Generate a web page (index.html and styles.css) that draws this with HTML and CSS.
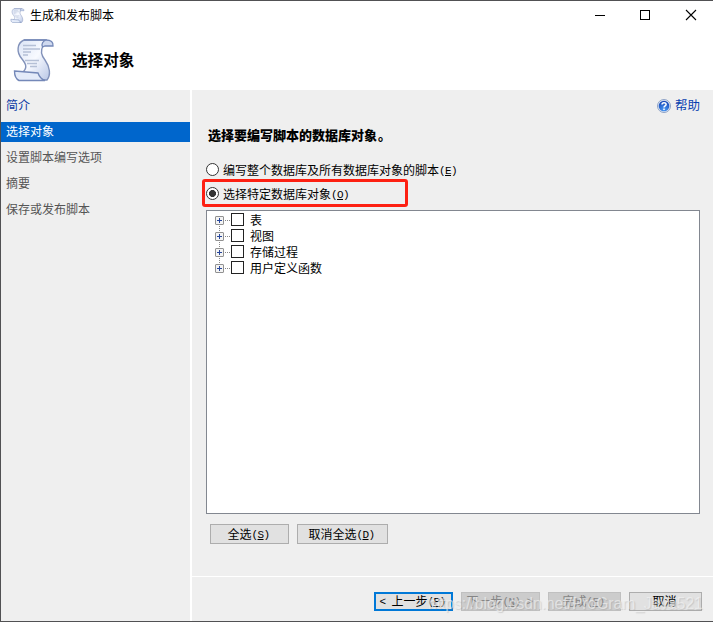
FILE: index.html
```html
<!DOCTYPE html>
<html lang="zh-CN">
<head>
<meta charset="utf-8">
<title>生成和发布脚本</title>
<link rel="stylesheet" href="styles.css">
</head>
<body>
<svg width="0" height="0" class="defs" aria-hidden="true">
  <defs>
    <linearGradient id="paper" x1="0" y1="0" x2="1" y2="1"><stop offset="0" stop-color="#dbe4f6"/><stop offset=".5" stop-color="#f8faff"/><stop offset="1" stop-color="#b9c7e6"/></linearGradient>
    <radialGradient id="ball" cx=".5" cy=".85" r=".8"><stop offset="0" stop-color="#4b9bf5"/><stop offset="1" stop-color="#1748b8"/></radialGradient>
    <symbol id="scroll" viewBox="0 0 42 44">
      <path d="M11 2H33L30 8C27 13 28 17 32 22C37 29 38 37 34 42H28L9 35C15 30 13 26 9 21C3 14 4 5 11 2Z" fill="url(#paper)" stroke="#8292ba" stroke-width="1.400"/>
      <path d="M11 2H33C38 2 40.500 4 40 8H32L29.500 9C28 6 30 3 33 2" fill="#d0daf0" stroke="#7488b8" stroke-width="1.300"/>
      <path d="M1.500 33L25 35C26 38 28 41 32 42.500H6C3 41 1.500 38 1.500 33Z" fill="#e4ebf9" stroke="#7488b8" stroke-width="1.400"/>
      <path d="M10 7.500H23M10 11H27M10 14H18M10 17H15M12 22.500H26M14 25.500H24M17 28.500H24" stroke="#b5c0d6" stroke-width="1.300"/>
    </symbol>
  </defs>
</svg>
<div class="window">
  <header class="titlebar">
    <svg class="app-icon"><use href="#scroll"/></svg>
    <span class="caption">生成和发布脚本</span>
    <svg class="controls" viewBox="0 0 102 12"><path d="M0 6.500H10" stroke="#000"/><rect x="45.500" y="1.500" width="9" height="9" fill="none" stroke="#000"/><path d="M91 1L101 11M101 1L91 11" stroke="#000" stroke-width="1.100"/></svg>
  </header>
  <div class="banner">
    <svg class="banner-icon"><use href="#scroll"/></svg>
    <h1>选择对象</h1>
  </div>
  <div class="body">
    <nav class="steps">
      <a class="step visited">简介</a>
      <a class="step current">选择对象</a>
      <a class="step">设置脚本编写选项</a>
      <a class="step">摘要</a>
      <a class="step">保存或发布脚本</a>
    </nav>
    <main class="main">
      <section class="content">
        <div class="help">
          <svg viewBox="0 0 14 14" class="help-icon"><circle cx="7" cy="7" r="6.500" fill="#dce5f3" stroke="#8fa3c6"/><circle cx="7" cy="7" r="5.300" fill="url(#ball)"/><path d="M5 5.600C5 3 9.100 3.100 9.100 5.400C9.100 6.800 7 6.800 7 8.400M7 9.500V11" fill="none" stroke="#fff" stroke-width="1.500"/></svg>
          <span>帮助</span>
        </div>
        <h2>选择要编写脚本的数据库对象<span class="stop">。</span></h2>
        <label class="option"><i class="radio"></i><span>编写整个数据库及所有数据库对象的脚本<b>(<u>E</u>)</b></span></label>
        <div class="highlight"><label class="option"><i class="radio on"></i><span>选择特定数据库对象<b>(<u>O</u>)</b></span></label></div>
        <div class="tree">
          <div class="node"><i class="plus"></i><i class="dots"></i><i class="check"></i><span>表</span></div>
          <div class="node"><i class="plus"></i><i class="dots"></i><i class="check"></i><span>视图</span></div>
          <div class="node"><i class="plus"></i><i class="dots"></i><i class="check"></i><span>存储过程</span></div>
          <div class="node"><i class="plus"></i><i class="dots"></i><i class="check"></i><span>用户定义函数</span></div>
        </div>
        <div class="select-buttons">
          <button class="btn all"><span>全选<b>(<u>S</u>)</b></span></button>
          <button class="btn none"><span>取消全选<b>(<u>D</u>)</b></span></button>
        </div>
      </section>
      <footer class="footer">
        <button class="btn back"><span><b>&lt; </b>上一步<b>(<u>P</u>)</b></span></button>
        <button class="btn next" disabled><span>下一步<b>(<u>N</u>) &gt;</b></span></button>
        <button class="btn finish" disabled><span>完成<b>(<u>F</u>)</b></span></button>
        <button class="btn cancel"><span>取消</span></button>
      </footer>
    </main>
  </div>
  <div class="watermark">https://blog.csdn.net/ProGram_Java521</div>
</div>
</body>
</html>
```

FILE: styles.css
```css
* { box-sizing: border-box; }
body {
  margin: 0;
  font: 12px/16px "Noto Sans CJK SC", sans-serif;
  color: #000;
}
.defs { display: block; height: 0; }
.window {
  position: relative;
  display: flex;
  flex-direction: column;
  width: 713px;
  height: 622px;
  overflow: hidden;
  background: #fff;
  border: 1px solid #515153;
  border-right: 0;
}
.titlebar {
  display: flex;
  align-items: center;
  height: 29px;
  padding: 0 16px 0 9px;
}
.app-icon { width: 15px; height: 15px; }
.caption { margin: -1px 0 0 5px; }
.controls { width: 102px; height: 12px; margin: -1px 0 0 auto; }
.banner {
  display: flex;
  align-items: center;
  height: 60px;
  padding-left: 12px;
}
.banner-icon { width: 42px; height: 44px; }
h1 { margin: -2px 0 0 17px; font-size: 15.6px; line-height: 20px; font-weight: 700; }
.body { display: flex; flex: 1; gap: 2px; min-height: 0; }
.steps {
  display: flex;
  flex-direction: column;
  gap: 6px;
  width: 189px;
  padding-top: 6px;
  background: #efefef;
}
.step { height: 20px; padding-left: 5px; line-height: 17px; color: #555; }
.visited { color: #0b3aa5; }
.current { background: #0066cc; color: #fff; }
.main { display: flex; flex: 1; flex-direction: column; background: #efefef; }
.content { display: flex; flex-direction: column; height: 486px; padding: 6px 13px 0 14px; }
.help {
  display: flex;
  align-items: center;
  justify-content: flex-end;
  gap: 4px;
  height: 20px;
  font-size: 12.5px;
  color: #0840b0;
}
.help span { margin-top: -2px; }
.help-icon { width: 14px; height: 14px; }
h2 { margin: 11px 0 0 2px; font-size: 13px; line-height: 16px; font-weight: 900; }
.stop { margin-left: 1px; }
.option { display: flex; align-items: center; gap: 4px; height: 16px; margin-top: 18px; white-space: nowrap; }
.option span { padding-top: 1px; }
.option b, .btn b {
  font: 11px/12px "Liberation Mono", monospace;
  letter-spacing: -.6px;
  vertical-align: 1px;
  white-space: pre;
}
.radio { width: 13px; height: 13px; border: 1px solid #333; border-radius: 50%; background: #fff; }
.on { background: radial-gradient(circle, #333 0 3.2px, #fff 3.8px); }
.highlight {
  width: 206px;
  height: 28px;
  margin: 2px 0 0 -4px;
  padding: 3px 0 0 1px;
  border: 3px solid #fd2012;
  border-radius: 3px;
}
.highlight .option { margin: 0; }
.tree {
  width: 494px;
  height: 304px;
  margin-top: 3px;
  padding: 1px 0 0 8px;
  background: #fff;
  border: 1px solid #828790;
}
.node {
  display: flex;
  align-items: center;
  height: 16px;
  background: repeating-linear-gradient(#888 0 1px, transparent 1px 2px) 4px 0 / 1px 100% no-repeat;
}
.node:first-child { background-position-y: 8px; }
.node:last-child { background-size: 1px 8px; }
.plus {
  width: 9px;
  height: 9px;
  border: 1px solid #919191;
  border-radius: 1px;
  background:
    linear-gradient(#27469b, #27469b) center / 5px 1px no-repeat,
    linear-gradient(#27469b, #27469b) center / 1px 5px no-repeat,
    #f4f4f4;
}
.dots { width: 7px; height: 1px; background: repeating-linear-gradient(90deg, transparent 0 1px, #888 1px 2px); }
.check { width: 13px; height: 13px; margin-top: -2px; border: 1px solid #222; background: #fff; }
.node span { margin-left: 6px; }
.select-buttons { display: flex; gap: 8px; margin: 10px 0 0 4px; }
.btn {
  display: flex;
  align-items: center;
  justify-content: center;
  height: 20px;
  padding: 0 2px 0 0;
  border: 1px solid #adadad;
  background: #e1e1e1;
  color: #000;
  font: inherit;
  white-space: nowrap;
}
.all { width: 79px; }
.none { width: 91px; }
.footer {
  display: flex;
  gap: 8px;
  flex: 1;
  padding: 15px 0 0 182px;
  border-top: 1px solid #fff;
}
.footer .btn { height: 19px; }
.footer .btn span { margin-top: -1px; }
.back, .next { width: 79px; }
.btn.back { border: 2px solid #0078d7; }
.finish, .cancel { width: 73px; }
.btn:disabled { border-color: #c0c0c0; background: #cccccc; color: #858585; }
.watermark {
  position: absolute;
  left: 427px;
  top: 594px;
  font: 15.6px/18px "Liberation Sans", sans-serif;
  color: rgba(245, 245, 245, .62);
  text-shadow: 1px 1px 1px rgba(130, 130, 130, .28);
  white-space: nowrap;
}
```
